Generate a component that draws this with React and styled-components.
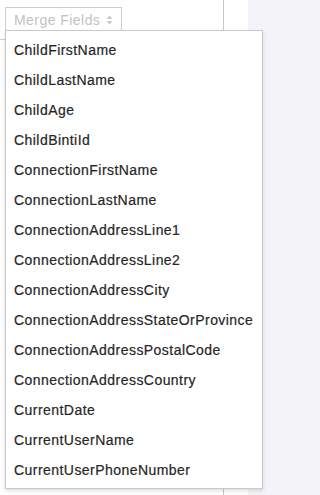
import React from 'react';
import styled, { createGlobalStyle } from 'styled-components';

const fields = [
  'ChildFirstName',
  'ChildLastName',
  'ChildAge',
  'ChildBintiId',
  'ConnectionFirstName',
  'ConnectionLastName',
  'ConnectionAddressLine1',
  'ConnectionAddressLine2',
  'ConnectionAddressCity',
  'ConnectionAddressStateOrProvince',
  'ConnectionAddressPostalCode',
  'ConnectionAddressCountry',
  'CurrentDate',
  'CurrentUserName',
  'CurrentUserPhoneNumber',
];

const GlobalStyle = createGlobalStyle`
  html, body { margin: 0; padding: 0; background: #fff; }
  body { font-family: "Liberation Sans", Arial, sans-serif; }
`;

const App = () => {
  return (
    <>
      <GlobalStyle />
      <Page>
        <Editor>
          <Toolbar>
            <SelectButton>
              Merge Fields
              <SortIcon />
            </SelectButton>
          </Toolbar>
        </Editor>
        <Gutter />
        <Sidebar />
        <Menu>
          {fields.map((name) => (
            <MenuItem key={name}>{name}</MenuItem>
          ))}
        </Menu>
      </Page>
    </>
  );
};

const SortIcon = () => (
  <svg width="7" height="10" viewBox="0 0 7 10">
    <path d="M3.5 0.5 L6.5 4 H0.5 Z" fill="#c9c9c9" />
    <path d="M3.5 9.5 L6.5 6 H0.5 Z" fill="#c9c9c9" />
  </svg>
);

const Page = styled.div`
  position: relative;
  display: flex;
  width: 100%;
  height: 100vh;
  min-height: 495px;
  overflow: hidden;
`;

const Editor = styled.div`
  flex: 0 0 223px;
  border-right: 1px solid #c8c8c8;
  display: flex;
  flex-direction: column;
`;

const Toolbar = styled.div`
  height: 40px;
  border-bottom: 1px solid #cfcfcf;
  padding: 7px 0 0 5px;
  box-sizing: border-box;
`;

const SelectButton = styled.div`
  display: flex;
  align-items: center;
  justify-content: space-between;
  width: 117px;
  height: 26px;
  box-sizing: border-box;
  padding: 0 8px;
  border: 1px solid #cdcdcd;
  color: #c2c2c2;
  font-size: 14px;
  letter-spacing: 0.45px;
`;

const Gutter = styled.div`
  flex: 0 0 24px;
  background: #fff;
`;

const Sidebar = styled.div`
  flex: 1;
  background: #f3f3f9;
`;

const Menu = styled.ul`
  position: absolute;
  top: 30px;
  left: 5px;
  width: 258px;
  margin: 0;
  padding: 4px 0 3px;
  list-style: none;
  box-sizing: border-box;
  background: #fff;
  border: 1px solid #c9c9c9;
  box-shadow: 0 2px 4px rgba(0, 0, 0, 0.12);
`;

const MenuItem = styled.li`
  height: 30px;
  line-height: 30px;
  padding-left: 8px;
  color: #262626;
  font-size: 14px;
  letter-spacing: 0.45px;
  white-space: nowrap;
  -webkit-text-stroke: 0.2px #262626;
`;

export default App;
